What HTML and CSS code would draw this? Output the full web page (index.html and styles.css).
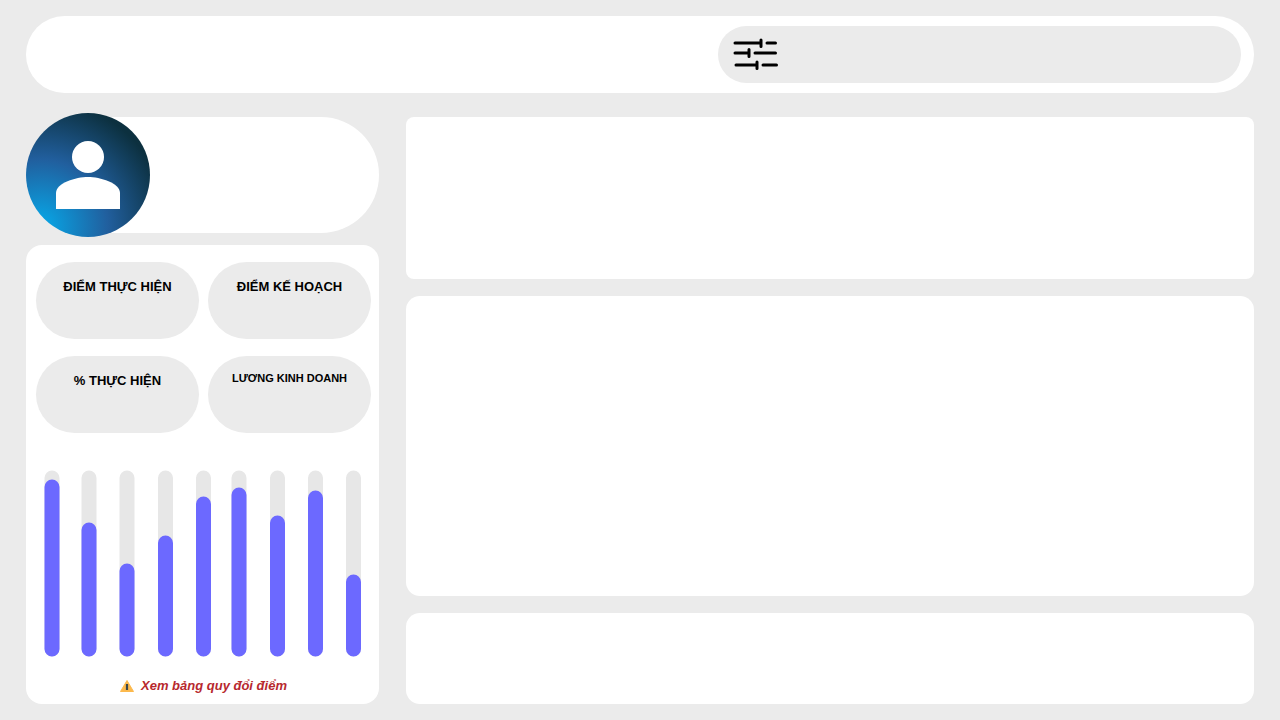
FILE: index.html
```html
<!DOCTYPE html>
<html lang="vi">
<head>
<meta charset="utf-8">
<meta name="viewport" content="width=device-width, initial-scale=1">
<title>KPI</title>
<link rel="stylesheet" href="styles.css">
</head>
<body>
<div class="page">
  <header class="topbar">
    <div class="filters">
      <svg class="filters-icon" width="46" height="34" viewBox="0 0 46 34" aria-hidden="true">
        <path d="M2 5H28M34 5H42.500M2 15H16M22 15H42.500M3 27H24M30 27H43.500M28 2V8.500M16 11.500V18.500M24 24V30.500"/>
      </svg>
    </div>
  </header>
  <main class="columns">
    <aside class="sidebar">
      <section class="profile">
        <svg class="avatar" width="124" height="124" viewBox="0 0 124 124" aria-hidden="true">
          <defs>
            <radialGradient id="avatar-fill" gradientUnits="userSpaceOnUse" cx="14" cy="114" r="128">
              <stop offset="0" stop-color="#05a4e4"/>
              <stop offset="0.1" stop-color="#0b9cdc"/>
              <stop offset="0.53" stop-color="#215f9e"/>
              <stop offset="1" stop-color="#0c303f"/>
            </radialGradient>
          </defs>
          <circle cx="62" cy="62" r="62" fill="url(#avatar-fill)"/>
          <circle cx="62" cy="44" r="16" fill="#fff"/>
          <path d="M30 96V80C30 70 50 64 62 64S94 70 94 80V96Z" fill="#fff"/>
        </svg>
      </section>
      <section class="summary">
        <div class="stats">
          <div class="stat"><h2 class="stat-title">ĐIỂM THỰC HIỆN</h2></div>
          <div class="stat"><h2 class="stat-title">ĐIỂM KẾ HOẠCH</h2></div>
          <div class="stat"><h2 class="stat-title">% THỰC HIỆN</h2></div>
          <div class="stat"><h2 class="stat-title stat-title-small">LƯƠNG KINH DOANH</h2></div>
        </div>
        <svg class="chart" viewBox="0 0 335 187" aria-hidden="true">
          <path class="track" d="M16 8V179M53 8V179M91 8V179M129.500 8V179M167.500 8V179M203 8V179M241.500 8V179M279.500 8V179M317.500 8V179"/>
          <path class="value" d="M16 17V179M53 60V179M91 101V179M129.500 73V179M167.500 34V179M203 25V179M241.500 53V179M279.500 28V179M317.500 112V179"/>
        </svg>
        <a class="convert" href="#">
          <svg width="14" height="12" viewBox="0 0 14 12" aria-hidden="true">
            <path d="M7 0.500L13.500 11.500H0.500Z" fill="#fcb94d" stroke="#fcb94d" stroke-linejoin="round"/>
            <path d="M7 4V10" stroke="#37474f" stroke-width="2.200"/>
          </svg>
          <span>Xem bảng quy đổi điểm</span>
        </a>
      </section>
    </aside>
    <div class="panels">
      <section class="panel panel-top"></section>
      <section class="panel"></section>
      <section class="panel"></section>
    </div>
  </main>
</div>
</body>
</html>
```
FILE: styles.css
```css
* {
  box-sizing: border-box;
}

body {
  margin: 0;
  background: #ebebeb;
  color: #000;
  font-family: "Liberation Sans", Arial, sans-serif;
}

.page {
  display: flex;
  flex-direction: column;
  gap: 24px;
  min-height: 100vh;
  padding: 16px 26px;
}

.topbar {
  display: flex;
  justify-content: flex-end;
  padding: 10px 13px;
  border-radius: 39px;
  background: #fff;
}

.filters {
  display: flex;
  align-items: center;
  width: 43.5%;
  min-height: 57px;
  padding: 0 15px;
  border-radius: 29px;
  background: #ebebeb;
}

.filters-icon {
  fill: none;
  stroke: #000;
  stroke-width: 3;
  stroke-linecap: round;
}

.columns {
  flex: 1;
  display: grid;
  grid-template-columns: 353fr 848fr;
  gap: 27px;
}

.sidebar {
  display: flex;
  flex-direction: column;
  gap: 12px;
}

.profile {
  display: flex;
  align-items: center;
  height: 116px;
  border-radius: 58px;
  background: #fff;
}

.avatar {
  flex: none;
}

.summary {
  flex: 1;
  display: flex;
  flex-direction: column;
  padding: 17px 8px 10px 10px;
  border-radius: 16px;
  background: #fff;
}

.stats {
  display: grid;
  grid-template-columns: 1fr 1fr;
  gap: 17px 9px;
}

.stat {
  min-height: 77px;
  padding-top: 16px;
  border-radius: 39px;
  background: #ebebeb;
  text-align: center;
}

.stat-title {
  margin: 0;
  font-size: 13px;
  line-height: 17px;
  font-weight: 700;
}

.stat-title-small {
  font-size: 11px;
  line-height: 13px;
}

.chart {
  width: 100%;
  margin-top: 37px;
  fill: none;
  stroke-width: 15;
  stroke-linecap: round;
}

.track {
  stroke: #e7e7e7;
}

.value {
  stroke: #6c69ff;
}

.convert {
  display: flex;
  align-items: center;
  justify-content: center;
  gap: 7px;
  margin-top: auto;
  color: #b7282e;
  font-size: 13px;
  line-height: 16px;
  font-style: italic;
  font-weight: 700;
  text-decoration: none;
}

.panels {
  display: grid;
  grid-template-rows: 162fr 300fr 91fr;
  gap: 17px;
}

.panel {
  border-radius: 14px;
  background: #fff;
}

.panel-top {
  border-radius: 8px;
}
```
